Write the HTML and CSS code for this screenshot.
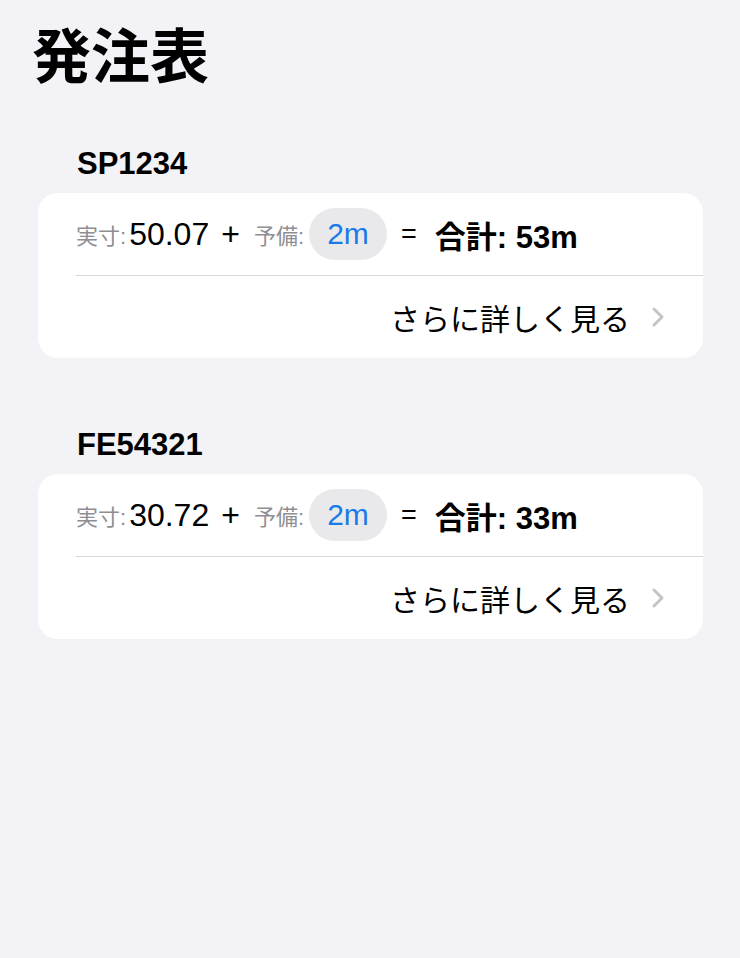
FILE: index.html
```html
<!doctype html>
<html lang="ja">
	<head>
		<title>発注表</title>
		<meta charset="utf-8" />
		<link rel="stylesheet" href="styles.css">
	</head>
	<body>
		<h1 class="page-title">発注表</h1>

		<div class="section">
			<h2 class="section-title">SP1234</h2>
			<div class="card">
				<div class="row-sum">
					<span class="label">実寸:</span>
					<span class="value">50.07</span>
					<span class="op op-plus">+</span>
					<span class="label">予備:</span>
					<span class="pill">2m</span>
					<span class="op op-eq">=</span>
					<span class="total">合計: 53m</span>
				</div>
				<div class="divider"></div>
				<div class="row-more">
					<span class="more-text">さらに詳しく見る</span>
					<svg class="chevron" width="14" height="22" viewBox="0 0 14 22"><path d="M3 3 L11 11 L3 19" fill="none" stroke="#c4c4c7" stroke-width="3" stroke-linecap="round" stroke-linejoin="round"/></svg>
				</div>
			</div>
		</div>

		<div class="section">
			<h2 class="section-title">FE54321</h2>
			<div class="card">
				<div class="row-sum">
					<span class="label">実寸:</span>
					<span class="value">30.72</span>
					<span class="op op-plus">+</span>
					<span class="label">予備:</span>
					<span class="pill">2m</span>
					<span class="op op-eq">=</span>
					<span class="total">合計: 33m</span>
				</div>
				<div class="divider"></div>
				<div class="row-more">
					<span class="more-text">さらに詳しく見る</span>
					<svg class="chevron" width="14" height="22" viewBox="0 0 14 22"><path d="M3 3 L11 11 L3 19" fill="none" stroke="#c4c4c7" stroke-width="3" stroke-linecap="round" stroke-linejoin="round"/></svg>
				</div>
			</div>
		</div>
	</body>
</html>
```

FILE: styles.css
```css
*{
	margin:0;
	padding:0;
	box-sizing:border-box;
}

body{
	background:#f2f2f7;
	color:#000;
	font-family:"Liberation Sans","Noto Sans CJK JP",sans-serif;
}

/* 大見出し */
.page-title{
	font-size:59px;
	font-weight:700;
	line-height:72px;
	padding:22px 0 0 32px;
}

.section{
	margin:0 37px 0 38px;
}
.section + .section{
	margin-top:69px;
}

.section-title{
	font-size:31px;
	font-weight:700;
	line-height:36px;
	padding:52px 0 0 39px;
	margin-bottom:11px;
}
.section + .section .section-title{
	padding-top:0;
}

/* カード */
.card{
	background:#fff;
	border-radius:20px;
	overflow:hidden;
}

.row-sum{
	height:82px;
	display:flex;
	align-items:center;
	padding-left:38px;
	white-space:nowrap;
}

.label{
	font-size:22px;
	color:#8e8e93;
	margin-right:3px;
}

.value{
	font-size:32px;
}

.op{
	font-size:32px;
}
.op-plus{
	margin:0 14px 0 12px;
}
.op-eq{
	margin:0 18px 0 14px;
	font-size:27px;
}

.pill{
	display:inline-flex;
	align-items:center;
	justify-content:center;
	width:78px;
	height:52px;
	border-radius:26px;
	background:#e9e9eb;
	color:#1a7ae8;
	font-size:30px;
	margin-left:2px;
}

.total{
	font-size:31px;
	font-weight:700;
}

.divider{
	height:1px;
	background:#d8d8dc;
	margin-left:38px;
}

.row-more{
	height:82px;
	display:flex;
	align-items:center;
	justify-content:flex-end;
	padding-right:38px;
}

.more-text{
	font-size:30px;
	margin-right:21px;
}

.chevron{
	display:block;
}
```
